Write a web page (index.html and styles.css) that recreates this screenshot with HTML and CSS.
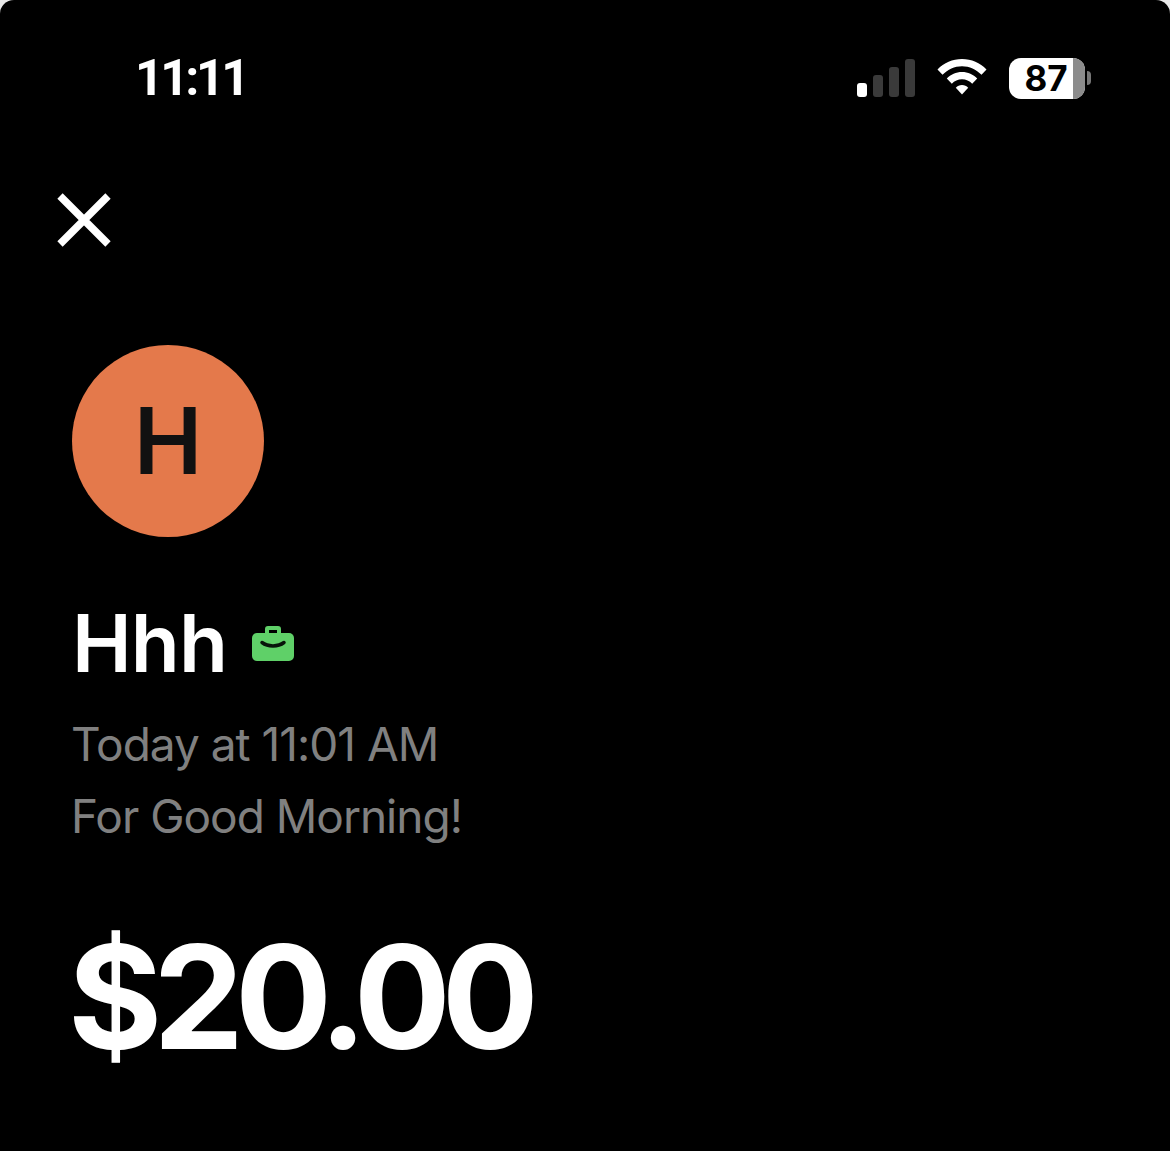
FILE: index.html
```html
<!DOCTYPE html>
<html lang="en">
<head>
<meta charset="utf-8">
<title>Payment</title>
<link rel="stylesheet" href="styles.css">
</head>
<body>
<main class="screen">
  <header class="status">
    <span class="time">11:11</span>
    <div class="indicators">
      <svg class="signal" width="58" height="38" viewBox="0 0 58 38">
        <rect x="0" y="24" width="10" height="14" rx="3" fill="#fff"/>
        <rect x="16" y="16" width="10" height="22" rx="3" fill="#3a3a3a"/>
        <rect x="32" y="8" width="10" height="30" rx="3" fill="#3a3a3a"/>
        <rect x="48" y="0" width="10" height="38" rx="3" fill="#3a3a3a"/>
      </svg>
      <svg class="wifi" width="50" height="38" viewBox="0 0 50 38">
        <path d="M25 0C15.500 0 7 3.800 0.500 10.500L5.500 15.800C10.800 10.300 17.500 7.200 25 7.200S39.200 10.300 44.500 15.800L49.500 10.500C43 3.800 34.500 0 25 0Z" fill="#fff"/>
        <path d="M25 13C19 13 13.800 15.400 9.800 19.500L14.800 24.800C17.500 22 21 20.300 25 20.300S32.500 22 35.200 24.800L40.200 19.500C36.200 15.400 31 13 25 13Z" fill="#fff"/>
        <path d="M25 26C22.500 26 20.500 27 18.800 28.700L25 35.500L31.200 28.700C29.500 27 27.500 26 25 26Z" fill="#fff"/>
      </svg>
      <div class="battery">
        <div class="cell"><span class="level">87</span><span class="rest"></span></div>
        <span class="nub"></span>
      </div>
    </div>
  </header>
  <svg class="close" width="54" height="54" viewBox="0 0 54 54">
    <path d="M3 3L51 51M51 3L3 51" stroke="#fff" stroke-width="7.500" fill="none"/>
  </svg>
  <div class="avatar">H</div>
  <div class="name-row">
    <h1 class="name">Hhh</h1>
    <svg class="case" width="42" height="36" viewBox="0 0 42 36">
      <path d="M13 8V4C13 2 14 1 16 1H26C28 1 29 2 29 4V8H25V5H17V8Z" fill="#5fd068"/>
      <rect x="0" y="8" width="42" height="28" rx="5" fill="#5fd068"/>
      <path d="M10 17.500C16 22 26 22 32 17.500" stroke="#07140a" stroke-width="3.500" stroke-linecap="round" fill="none"/>
    </svg>
  </div>
  <p class="meta">Today at 11:01 AM</p>
  <p class="meta">For Good Morning!</p>
  <p class="amount">$20.00</p>
</main>
</body>
</html>
```
FILE: styles.css
```css
* { box-sizing: border-box; }
html, body { margin: 0; padding: 0; background: #e9e9e9; }
body { font-family: Inter, "Liberation Sans", sans-serif; }
.screen {
  height: 1151px;
  background: #000;
  color: #fff;
  border-radius: 14px 14px 0 0;
  overflow: hidden;
  padding: 49px 0 0 72px;
}
.status {
  display: flex;
  justify-content: space-between;
  align-items: center;
  height: 58px;
  padding: 0 79px 0 63px;
}
.time { font-size: 50px; font-weight: 700; line-height: 58px; letter-spacing: -3.500px; font-family: Roboto, sans-serif; }
.indicators { display: flex; align-items: center; gap: 22px; }
.battery { display: flex; align-items: center; gap: 2px; }
.cell {
  display: flex;
  width: 76px;
  height: 41px;
  border-radius: 12px;
  overflow: hidden;
  background: #fff;
}
.level {
  flex: 1;
  color: #000;
  font-size: 35px;
  font-weight: 700;
  line-height: 41px;
  text-align: center;
  padding-left: 10px;
}
.rest { width: 12px; background: #8c8c8c; }
.nub { width: 4px; height: 14px; background: #777; border-radius: 0 6px 6px 0; }
.close { display: block; margin: 86px 0 0 -15px; }
.avatar {
  width: 192px;
  height: 192px;
  margin-top: 98px;
  border-radius: 50%;
  background: #e4794b;
  color: #111;
  font-size: 92px;
  font-weight: 600;
  line-height: 192px;
  text-align: center;
}
.name-row { display: flex; align-items: center; gap: 25px; margin-top: 58px; }
.name { margin: 0; font-size: 80px; font-weight: 600; line-height: 96px; letter-spacing: -0.800px; }
.meta { margin: 0 0 0 -1px; font-size: 46px; line-height: 72px; color: #808080; letter-spacing: -1px; }
.name-row + .meta { margin-top: 17px; }
.amount { margin: 65px 0 0 -4px; font-size: 144px; font-weight: 700; line-height: 160px; letter-spacing: -9px; }
```
